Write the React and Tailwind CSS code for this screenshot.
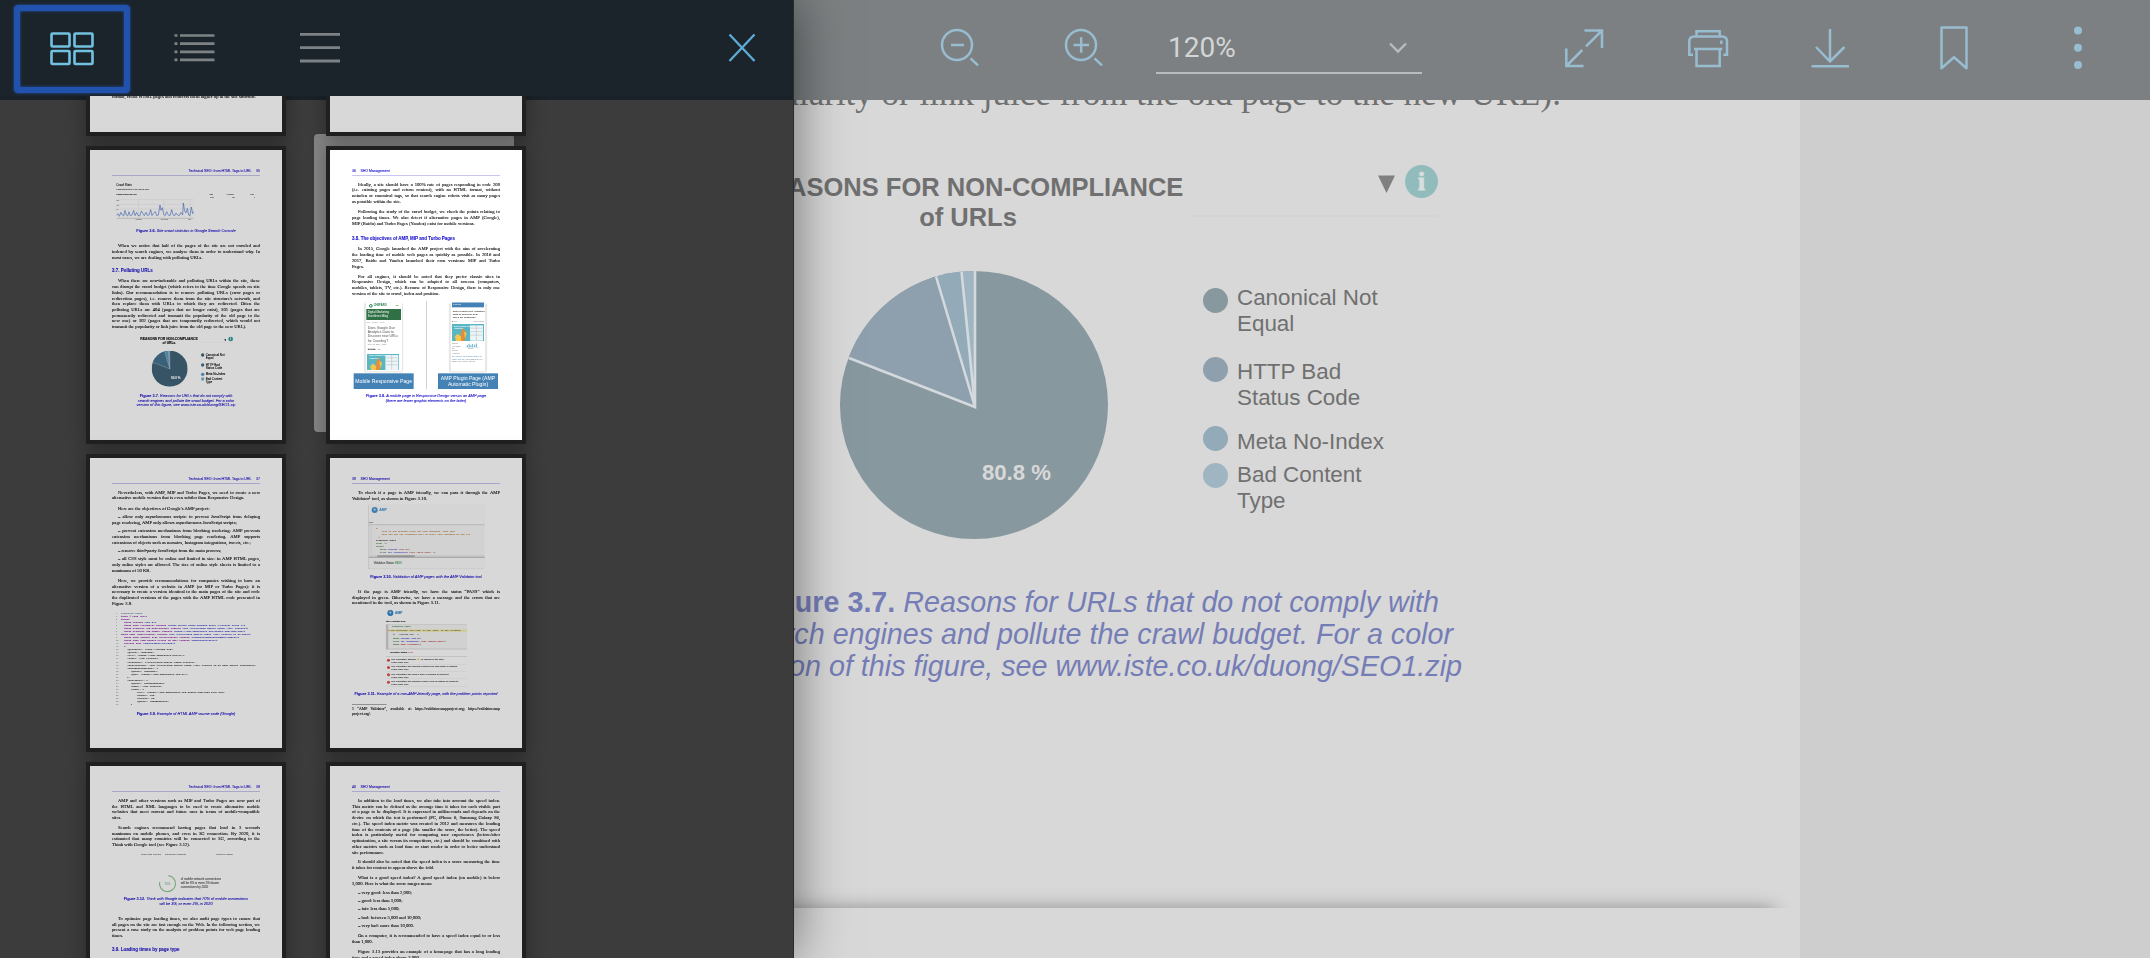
import React from "react";

const SERIF = "font-['Liberation_Serif',serif]";
const SANS = "font-['Liberation_Sans',sans-serif]";

/* ---------- Thumbnail building blocks (drawn at 3x, scaled down) ---------- */

function Thumb({ active, children }) {
  return (
    <div className="relative">
      {active && (
        <div className="absolute -left-3 -top-3 -z-10 h-[298px] w-[200px] rounded bg-[#858585]" />
      )}
      <div className="h-[298px] w-[200px] border-4 border-[#202020] shadow-[0_3px_18px_rgba(0,0,0,0.32)]">
        <div className={active ? "h-[290px] w-[192px] overflow-hidden bg-white" : "h-[290px] w-[192px] overflow-hidden bg-white brightness-[0.847]"}>
          <div className="h-[870px] w-[576px] origin-top-left scale-[0.33333] px-[66px] text-black [-webkit-text-stroke:0.25px]">
            {children}
          </div>
        </div>
      </div>
    </div>
  );
}

function Head({ left, page, title }) {
  return (
    <div className="pt-[54px] font-['Liberation_Sans',sans-serif] text-[10.6px] text-[#1a10c8]">
      <div className={left ? "flex h-[22px] gap-[14px] border-b border-[#5a52cc] leading-[19px]" : "flex h-[22px] flex-row-reverse gap-[14px] border-b border-[#5a52cc] leading-[19px]"}>
        <span>{page}</span>
        <span>{title}</span>
      </div>
    </div>
  );
}

function Para({ h, lines, full }) {
  return (
    <div className={`${SERIF} ${h} text-[14px] leading-[17.2px] whitespace-nowrap`}>
      {lines.map((l, i) => (
        <div
          key={i}
          className={`${i === 0 ? "pl-[18px]" : ""} ${i < lines.length - 1 || full ? "[text-align-last:justify]" : ""}`}
        >
          {l}
        </div>
      ))}
    </div>
  );
}

function Section({ h, children }) {
  return <div className={`${SANS} ${h} text-[13.4px] font-bold leading-[17.2px] whitespace-nowrap text-[#1a10c8]`}>{children}</div>;
}

function Caption({ h, label, lines }) {
  return (
    <div className={`${SANS} ${h} text-center text-[11.6px] italic leading-[13px] whitespace-nowrap text-[#1a10c8]`}>
      {lines.map((l, i) => (
        <div key={i}>
          {i === 0 && <b className="not-italic">{label} </b>}
          {l}
        </div>
      ))}
    </div>
  );
}

/* ---------- Pie chart ---------- */

function Pie({ className, dark, mid, light, pale, line }) {
  return (
    <svg viewBox="-134 -134 268 268" className={className}>
      <circle r="134" fill={dark} />
      <path d="M0 0 L-125 -48 A134 134 0 0 1 -38 -128.5 Z" fill={mid} />
      <path d="M0 0 L-38 -128.5 A134 134 0 0 1 -12.5 -133.4 Z" fill={light} />
      <path d="M0 0 L-12.5 -133.4 A134 134 0 0 1 1 -134 Z" fill={pale} />
      <path d="M1 -134 V2 L-125 -47 M1 2 L-38 -128.5 M1 2 L-12.5 -133.4" fill="none" stroke={line} strokeWidth="2.6" />
    </svg>
  );
}

/* ---------- Thumbnails ---------- */

const CRAWL =
  "0,46 5,40 9,48 14,36 18,44 22,47 26,30 30,44 34,47 38,34 42,46 47,44 52,30 56,46 61,36 65,45 70,47 75,32 80,40 84,46 89,36 93,45 98,44 103,28 107,46 112,38 117,34 121,46 126,44 131,14 134,30 138,22 142,42 146,46 151,34 156,44 161,46 166,28 170,42 174,47 179,38 184,44 189,46 194,36 199,44 201,8 205,32 209,38 213,24 217,44 221,46 225,20 229,40 232,34";

function Page35() {
  return (
    <Thumb>
      <Head page="35" title="Technical SEO: from HTML Tags to URL" />
      <div className="h-[159px] pl-[13px] pt-[23px] font-['Liberation_Sans',sans-serif] text-[#555]">
        <div className="text-[9px] leading-[13px] text-[#222]">Crawl Stats</div>
        <div className="text-[6px] leading-[13px]">Googlebot activity in the last 90 days</div>
        <div className="flex text-[6px] leading-[14px]">
          <span className="w-[278px] text-[#222]">Pages crawled per day</span>
          <span className="w-[52px]">High</span>
          <span className="w-[72px]">Average</span>
          <span>Low</span>
        </div>
        <div className="flex text-[6px] leading-[8px]">
          <span className="w-[282px]" />
          <span className="w-[66px]">131</span>
          <span className="w-[65px]">38</span>
          <span>4</span>
        </div>
        <svg viewBox="0 0 234 68" className="h-[68px] w-[234px]">
          <path d="M0 2H232 M0 16H232 M0 30H232 M66 2V58 M143 2V58 M222 2V58" stroke="#ddd" />
          <path d="M0 58H232" stroke="#888" />
          <polyline points={CRAWL} fill="none" stroke="#4a72d0" strokeWidth="1.9" transform="translate(0,4)" />
          <text x="56" y="64" fontSize="5" fill="#333">Apr 2018</text>
          <text x="133" y="64" fontSize="5" fill="#333">May 2018</text>
          <text x="216" y="64" fontSize="5" fill="#333">Jun</text>
          <text x="0" y="6" fontSize="5" fill="#333">150</text>
          <text x="0" y="20" fontSize="5" fill="#333">100</text>
          <text x="0" y="34" fontSize="5" fill="#333">50</text>
        </svg>
      </div>
      <Caption h="h-[44px]" label="Figure 3.6." lines={["Site crawl statistics in Google Search Console"]} />
      <Para h="h-[73px]" lines={["When we notice that half of the pages of the site are not crawled and", "indexed by search engines, we analyze them in order to understand why. In", "most cases, we are dealing with polluting URLs."]} />
      <Section h="h-[32px]">3.7. Polluting URLs</Section>
      <Para
        h="h-[177px]"
        lines={[
          "When there are non-indexable and polluting URLs within the site, these",
          "can disrupt the crawl budget (which refers to the time Google spends on site",
          "links). Our recommendation is to remove polluting URLs (error pages or",
          "redirection pages), i.e. remove them from the site structure's network, and",
          "then replace them with URLs to which they are redirected. Often the",
          "polluting URLs are 404 (pages that no longer exist), 301 (pages that are",
          "permanently redirected and transmit the popularity of the old page to the",
          "new one) or 302 (pages that are temporarily redirected, which would not",
          "transmit the popularity or link juice from the old page to the new URL).",
        ]}
      />
      <div className="flex h-[41px] font-['Liberation_Sans',sans-serif]">
        <div className="ml-[82px] w-[178px] text-center text-[10.2px] font-bold leading-[12px] whitespace-nowrap">
          REASONS FOR NON-COMPLIANCE<br />of URLs
        </div>
        <div className="ml-[4px] flex h-[18px] w-[99px] items-center justify-end gap-[5px] border-b border-[#eee]">
          <span className="text-[9px] leading-none">▼</span>
          <span className="-mt-[6px] flex size-[14px] items-center justify-center rounded-full bg-[#2a9d97] text-[10px] font-bold leading-none text-white">i</span>
        </div>
      </div>
      <div className="flex h-[129px]">
        <div className="ml-[119px] grid h-[108px] w-[108px]">
          <Pie className="col-start-1 row-start-1 size-[108px]" dark="#406379" mid="#44728f" light="#5a97ba" pale="#7bb1cc" line="#dfe8ee" />
          <span className="col-start-1 row-start-1 self-end justify-self-end pb-[21px] pr-[22px] font-['Liberation_Sans',sans-serif] text-[9px] font-bold leading-[12px] text-white">80.8 %</span>
        </div>
        <div className="ml-[40px] pt-[7px] font-['Liberation_Sans',sans-serif] text-[9px] leading-[10.4px]">
          <MiniKey c="bg-[#406379]" h="h-[30px]">Canonical Not<br />Equal</MiniKey>
          <MiniKey c="bg-[#44728f]" h="h-[28px]">HTTP Bad<br />Status Code</MiniKey>
          <MiniKey c="bg-[#5a97ba]" h="h-[14px]">Meta No-Index</MiniKey>
          <MiniKey c="bg-[#7bb1cc]" h="h-[22px]">Bad Content<br />Type</MiniKey>
        </div>
      </div>
      <Caption label="Figure 3.7." h="h-[40px]" lines={["Reasons for URLs that do not comply with", "search engines and pollute the crawl budget. For a color", "version of this figure, see www.iste.co.uk/duong/SEO1.zip"]} />
    </Thumb>
  );
}

function MiniKey({ c, h, children }) {
  return (
    <div className={`flex gap-[4px] ${h}`}>
      <span className={`mt-px size-[10px] rounded-full ${c}`} />
      <span className="whitespace-nowrap">{children}</span>
    </div>
  );
}

function Promo({ className }) {
  return (
    <svg viewBox="0 0 92 50" preserveAspectRatio="xMidYMin slice" className={className}>
      <rect width="92" height="50" fill="#59b7c4" />
      <rect x="52" y="4" width="37" height="44" fill="#eef5f7" />
      <path d="M54 12H87 M54 22H87 M54 32H87 M70 4V46" stroke="#a9b8bd" strokeWidth="1.4" />
      <path d="M8 36 L16 28 L26 36 V50 H12 Z" fill="#f3c74b" />
      <path d="M26 24 L32 12 L40 24 L36 50 H26 Z" fill="#ea8b35" />
      <path d="M34 22 L42 26 L38 42 Z" fill="#f3c74b" />
      <text x="5" y="8" fontSize="6" fontWeight="bold" fill="#fff">Does Google Use</text>
      <text x="5" y="15" fontSize="6" fontWeight="bold" fill="#fff">Analytics</text>
    </svg>
  );
}

function Page36() {
  return (
    <Thumb active>
      <Head left page="36" title="SEO Management" />
      <div className="h-[18px]" />
      <Para h="h-[83px]" lines={["Ideally, a site should have a 100% rate of pages responding in code 200", "(i.e. existing pages and return content), with an HTML format, without", "noindex or canonical tags, so that search engine robots visit as many pages", "as possible within the site."]} />
      <Para h="h-[79px]" lines={["Following the study of the crawl budget, we check the points relating to", "page loading times. We also detect if alternative pages in AMP (Google),", "MIP (Baidu) and Turbo Pages (Yandex) exist for mobile versions."]} />
      <Section h="h-[32px]">3.8. The objectives of AMP, MIP and Turbo Pages</Section>
      <Para h="h-[82px]" lines={["In 2015, Google launched the AMP project with the aim of accelerating", "the loading time of mobile web pages as quickly as possible. In 2016 and", "2017, Baidu and Yandex launched their own versions: MIP and Turbo", "Pages."]} />
      <Para h="h-[83px]" lines={["For all engines, it should be noted that they prefer classic sites in", "Responsive Design, which can be adapted to all screens (computers,", "mobiles, tablets, TV, etc.). Because of Responsive Design, there is only one", "version of the site to crawl, index and position."]} />
      <div className="flex h-[278px] font-['Liberation_Sans',sans-serif] [-webkit-text-stroke:0]">
        <div className="ml-[5px] w-[180px] pt-[4px]">
          <div className="mx-auto h-[208px] w-[110px] overflow-hidden bg-white px-[3px] shadow-[0_1px_5px_rgba(0,0,0,0.4)]">
            <div className="flex h-[20px] items-center gap-[3px] px-[8px] text-[8px] font-bold text-[#207848]">
              <span className="size-[11px] rounded-full border-[3px] border-[#207848]" />
              CHEFARO <span className="ml-auto text-[#84b840]">▬</span>
            </div>
            <div className="h-[33px] bg-[#2f7044] px-[4px] pt-[4px] text-[8.6px] leading-[11px] whitespace-nowrap text-white">Digital Marketing<br />Excellence Blog</div>
            <div className="h-[18px] pt-[5px] text-[5px] text-[#999]">SEO · Analytics · Google</div>
            <div className="h-[52px] px-[4px] text-[10.4px] leading-[12.6px] whitespace-nowrap text-[#555]">Does Google Use<br />Analytics Data to<br />Discover new URLs<br />for Crawling?</div>
            <div className="h-[31px] px-[4px] text-[6px] text-[#888]">June 15, 2018 · SEO<div className="pt-[6px] text-[8px] leading-none text-[#666]">■■■■■ <span className="text-[6px]">+ 25</span></div></div>
            <Promo className="mx-[3px] h-[48px] w-[96px]" />
          </div>
          <div className="mt-[5px] flex h-[47px] items-center justify-center bg-[#4482b6] text-[15.4px] whitespace-nowrap text-white">Mobile Responsive Page</div>
        </div>
        <div className="ml-[38px] h-[265px] w-px bg-[#777]" />
        <div className="ml-[34px] w-[180px] pt-[4px]">
          <div className="mx-auto h-[208px] w-[106px] overflow-hidden bg-white px-[5px] shadow-[0_1px_5px_rgba(0,0,0,0.4)]">
            <div className="h-[15px] bg-[#4482b6] px-[3px] text-[5px] leading-[14px] text-white">CHEFARO</div>
            <div className="px-[2px] pt-[8px] text-[7.4px] font-bold leading-[8.6px] whitespace-nowrap text-[#333]">Does Google Use Analytics<br />Data to Discover new<br />URLs for Crawling?</div>
            <div className="flex h-[16px] items-center justify-between text-[5px] text-[#777]"><span>■ Andy</span><span>June 15, 2018</span></div>
            <Promo className="h-[51px] w-[96px]" />
            <div className="flex h-[42px] gap-[10px] pt-[5px] text-[5.6px] leading-[7px] text-[#777]">
              <span className="w-[26px]">Should you install the Google Analytics</span>
              <svg viewBox="0 0 50 30" className="h-[26px] w-[50px]"><path d="M2 16H48" stroke="#4aa3c4" /><path d="M8 15V9 M14 15V4 M20 15V8 M26 15V5 M33 15V7 M39 15V3" stroke="#4aa3c4" strokeWidth="3" /><text x="10" y="23" fontSize="5" fill="#777">analytics</text></svg>
            </div>
            <div className="pt-[2px] text-[6px] leading-[7.4px]"><span className="text-[#3f86bb]">on your site for search engines to crawl your site.</span> <span className="text-[#777]">This argument is a simple one, but be careful.</span></div>
          </div>
          <div className="mt-[5px] flex h-[47px] items-center justify-center bg-[#4482b6] text-center text-[15.4px] leading-[18px] whitespace-nowrap text-white">AMP Plugin Page (AMP<br />Automatic Plugin)</div>
        </div>
      </div>
      <Caption h="h-[26px]" label="Figure 3.8." lines={["A mobile page in Responsive Design versus an AMP page", "(there are fewer graphic elements on the latter)"]} />
    </Thumb>
  );
}

const CODE = [
  ["", "text-[#68a]", "<!doctype html>"],
  ["", "text-[#81a]", '<html ⚡ lang="en">'],
  ["", "text-[#81a]", "<head>"],
  ["pl-[10px]", "text-[#81a]", "<meta charset=", '"utf-8">'],
  ["pl-[10px]", "text-[#81a]", '<meta name="viewport" content=', '"width=device-width,minimum-scale=1,initial-scale=1">'],
  ["pl-[10px]", "text-[#81a]", '<meta property="og:description" content=', '"The Accelerated Mobile Pages (AMP) Project">'],
  ["pl-[10px]", "text-[#81a]", '<meta property="og:image" content=', '"https://www.ampproject.org/static/img/logo.jpg">'],
  ["", "text-[#81a]", '<meta name="description" content=', '"The Accelerated Mobile Pages (AMP) Project is an open">'],
  ["pl-[10px]", "text-[#81a]", '<meta name="google-site-verification" content=', '"KRqSNjTcjW8eGfOfTnMZqGcYPpQhJk">'],
  ["pl-[10px]", "text-[#81a]", '<meta name="amp-google-client-id-api" content=', '"googleanalytics">'],
  ["pl-[10px]", "text-[#81a]", "<script type=", '"application/ld+json">'],
  ["pl-[10px]", "", "{"],
  ["pl-[20px]", "", '"@context": "http://schema.org",'],
  ["pl-[20px]", "", '"@type": "WebPage",'],
  ["pl-[20px]", "", '"url": "https://www.ampproject.org/fr/",'],
  ["pl-[20px]", "", '"name": "AMP Project",'],
  ["pl-[20px]", "", '"headline": "Accelerated Mobile Pages Project",'],
  ["pl-[20px]", "", '"description": "The Accelerated Mobile Pages (AMP) Project is an open source initiative"'],
  ["pl-[20px]", "", '"mainEntityOfPage": {'],
  ["pl-[30px]", "", '"@type": "WebPage",'],
  ["pl-[30px]", "", '"@id": "https://www.ampproject.org/fr/"'],
  ["pl-[20px]", "", "},"],
  ["pl-[20px]", "", '"publisher": {'],
  ["pl-[30px]", "", '"@type": "Organization",'],
  ["pl-[30px]", "", '"name": "AMP Project",'],
  ["pl-[30px]", "", '"logo": {'],
  ["pl-[48px]", "", '"url": "https://www.ampproject.org/static/img/logo-blue.svg",'],
  ["pl-[48px]", "", '"width": 175,'],
  ["pl-[48px]", "", '"height": 60,'],
  ["pl-[48px]", "", '"@type": "ImageObject"'],
  ["pl-[30px]", "", "}"],
];

function Page37() {
  return (
    <Thumb>
      <Head page="37" title="Technical SEO: from HTML Tags to URL" />
      <div className="h-[18px]" />
      <Para h="h-[48px]" lines={["Nevertheless, with AMP, MIP and Turbo Pages, we need to create a new", "alternative mobile version that is even subtler than Responsive Design."]} />
      <Para h="h-[26px]" lines={["Here are the objectives of Google's AMP project:"]} />
      <Para h="h-[42px]" lines={["– allow only asynchronous scripts: to prevent JavaScript from delaying", "page rendering, AMP only allows asynchronous JavaScript scripts;"]} />
      <Para h="h-[59px]" lines={["– prevent extension mechanisms from blocking rendering: AMP prevents", "extension mechanisms from blocking page rendering. AMP supports", "extensions of objects such as mosaics, Instagram integrations, tweets, etc.;"]} />
      <Para h="h-[25px]" lines={["– remove third-party JavaScript from the main process;"]} />
      <Para h="h-[65px]" lines={["– all CSS style must be online and limited in size: in AMP HTML pages,", "only online styles are allowed. The size of online style sheets is limited to a", "maximum of 50 KB."]} />
      <Para h="h-[103px]" lines={["Here, we provide recommendations for companies wishing to have an", "alternative version of a website in AMP (or MIP or Turbo Pages): it is", "necessary to create a version identical to the main pages of the site and code", "the duplicated versions of the pages with the AMP HTML code presented in", "Figure 3.9."]} />
      <div className="h-[299px] overflow-hidden pl-[12px] pr-[6px] font-['Liberation_Mono',monospace] text-[7.3px] leading-[9.1px] whitespace-nowrap text-[#333]">
        {CODE.map(([pad, color, a, b], i) => (
          <div key={i} className="flex overflow-hidden">
            <span className="w-[14px] shrink-0 text-[6px] text-[#aaa]">{i + 1}</span>
            <span className={`${pad} ${color}`}>{a}</span>
            <span className="text-[#33c]">{b}</span>
          </div>
        ))}
      </div>
      <Caption label="Figure 3.9." h="h-[20px]" lines={["Example of HTML AMP source code (Google)"]} />
    </Thumb>
  );
}

function AmpLogo() {
  return (
    <span className="flex items-center gap-[5px] text-[10px] font-bold text-[#1c79c0]">
      <span className="flex size-[18px] items-center justify-center rounded-full bg-[#1c79c0] text-[10px] text-white">ϟ</span>AMP
    </span>
  );
}

function Page38() {
  return (
    <Thumb>
      <Head left page="38" title="SEO Management" />
      <div className="h-[19px]" />
      <Para h="h-[46px]" lines={["To check if a page is AMP friendly, we can pass it through the AMP", "Validator¹ tool, as shown in Figure 3.10."]} />
      <div className="ml-[50px] h-[191px] w-[348px] bg-[#fafafa] font-['Liberation_Sans',sans-serif] opacity-80 shadow-[-1px_1px_3px_rgba(0,0,0,0.3)]">
        <div className="h-[46px] pl-[9px] pt-[6px]"><AmpLogo /></div>
        <div className="h-[15px] border-b-2 border-[#999] text-[7px] text-[#444]">URL</div>
        <div className="ml-[3px] h-[90px] overflow-hidden border-l-8 border-[#eee] bg-[#f7f7f7] pl-[10px] pt-[6px] font-['Liberation_Mono',monospace] text-[6.8px] leading-[9px] whitespace-nowrap">
          <div className="text-[#b06a20]">&lt;!--</div>
          <div className="pl-[18px] text-[#b06a20]">This is the minimum valid AMP HTML document. Type away</div>
          <div className="pl-[18px] text-[#b06a20]">here and the AMP Validator will re-check your document on the fly.</div>
          <div className="text-[#b06a20]">--&gt;</div>
          <div>&lt;!doctype html&gt;</div>
          <div className="text-[#2a7a2a]">&lt;html <span className="text-[#e59a20]">⚡</span>&gt;</div>
          <div className="text-[#2a7a2a]">&lt;head&gt;</div>
          <div className="pl-[12px] text-[#2a7a2a]">&lt;meta <span className="text-[#33c]">charset=</span><span className="text-[#b33]">"utf-8"</span>&gt;</div>
          <div className="pl-[12px] text-[#2a7a2a]">&lt;link <span className="text-[#33c]">rel="canonical"</span> <span className="text-[#b33]">href="self.html"</span> /&gt;</div>
        </div>
        <div className="h-[8px] border-b-2 border-[#aaa] bg-[#ddd]"><div className="ml-[26px] h-[5px] w-[112px] bg-[#999]" /></div>
        <div className="pl-[15px] pt-[9px] text-[8px] text-[#333]">Validation Status: <span className="text-[#3a9d4a]">PASS</span></div>
      </div>
      <div className="h-[18px]" />
      <Caption h="h-[42px]" label="Figure 3.10." lines={["Validation of AMP pages with the AMP Validator tool"]} />
      <Para h="h-[64px]" lines={["If the page is AMP friendly, we have the status “PASS” which is", "displayed in green. Otherwise, we have a message and the errors that are", "mentioned in the tool, as shown in Figure 3.11."]} />
      <div className="ml-[101px] h-[243px] w-[244px] overflow-hidden font-['Liberation_Sans',sans-serif] text-[7px] leading-[8.5px] whitespace-nowrap opacity-90">
        <div className="h-[30px] pl-[5px]"><AmpLogo /></div>
        <div className="h-[14px] border-b border-[#999]">http://validator.amp</div>
        <div className="h-[74px] overflow-hidden border-b-2 border-l-8 border-[#ccc] bg-[#f7f7f7] pt-[2px] font-['Liberation_Mono',monospace] text-[6.4px] text-[#2a7a2a]">
          <div className="pl-[10px]">&lt;!doctype html&gt;</div>
          <div className="my-[3px] bg-[#f6efb0] text-[#664]"><span className="text-[#d33]">■</span> The attribute 'xml:lang' in tag 'html' is not "allowed"</div>
          <div className="pl-[14px] text-[#555]">&lt;!-- charset tag --&gt;</div>
          <div className="mt-[4px] pl-[14px]">&lt;meta <span className="text-[#33c]">charset="utf-8"</span>&gt;</div>
          <div className="pl-[14px]">&lt;link <span className="text-[#33c]">rel="canonical"</span> <span className="text-[#b33]">href="sample.html"</span>&gt;</div>
          <div className="pl-[14px]">&lt;meta <span className="text-[#b33]">name="viewport"</span>&gt;</div>
        </div>
        <div className="h-[23px] border-b border-[#aaa] pl-[12px] pt-[5px]">Validation Status: <span className="text-[#d33]">FAIL</span></div>
        {["The mandatory attribute '⚡' is missing in tag 'html'.", "The mandatory tag 'noscript enclosure for boilerplate' is missing.", "The mandatory tag 'head > style' is missing or incorrect.", "The mandatory tag 'amphtml engine v0.js' is missing or incorrect."].map((t) => (
          <div key={t} className="flex h-[22px] gap-[4px] border-b border-[#ddd] pt-[3px] text-[#333]">
            <span className="ml-[4px] mt-[2px] size-[9px] rounded-full bg-[#dd3a30]" />
            <span>{t}<br />Learn more here</span>
          </div>
        ))}
      </div>
      <div className="-mx-[20px]"><Caption label="Figure 3.11." h="h-[39px]" lines={["Example of a non-AMP-friendly page, with the problem points reported"]} /></div>
      <div className="h-[6px] w-[104px] border-t border-black" />
      <div className="font-['Liberation_Serif',serif] text-[11.6px] leading-[16px] whitespace-nowrap">
        <div className="[text-align-last:justify]">1 “AMP Validator”, available at: https://validator.ampproject.org; https://validator.amp</div>
        <div>project.org/.</div>
      </div>
    </Thumb>
  );
}

function Page39() {
  return (
    <Thumb>
      <Head page="39" title="Technical SEO: from HTML Tags to URL" />
      <div className="h-[19px]" />
      <Para h="h-[81px]" lines={["AMP and other versions such as MIP and Turbo Pages are now part of", "the HTML and XML languages to be used to create alternative mobile", "websites that meet current and future uses in terms of mobile-compatible", "sites."]} />
      <Para h="h-[83px]" lines={["Search engines recommend having pages that load in 3 seconds", "maximum on mobile phones, and even in 3G connection. By 2020, it is", "estimated that many countries will be connected to 3G, according to the", "Think with Google tool (see Figure 3.12)."]} />
      <div className="flex h-[67px] pl-[87px] font-['Liberation_Sans',sans-serif] text-[7.5px] leading-[12px] text-[#777]">
        <span className="w-[72px]">Think with <span className="text-[#3b78e7]">G</span><span className="text-[#d33]">o</span><span className="text-[#eb0]">o</span><span className="text-[#3b78e7]">gle</span></span>
        <span className="w-[154px]">Consumer Insights</span>
        <span>Test my mobile</span>
      </div>
      <div className="flex h-[66px] pl-[139px] font-['Liberation_Sans',sans-serif] text-[9px] leading-[12.4px] text-[#555]">
        <svg viewBox="-27 -27 54 54" className="size-[54px]">
          <path d="M3 -24 A24 24 0 1 1 -23 -5" fill="none" stroke="#8cc48e" strokeWidth="3.5" />
          <text y="3" fontSize="9" textAnchor="middle" fill="#68b36b">70%</text>
        </svg>
        <div className="pl-[13px] pt-[7px] whitespace-nowrap">of mobile network connections<br />will be 3G or even 2G slower<br />connections by 2020</div>
      </div>
      <Caption h="h-[57px]" label="Figure 3.12." lines={["Think with Google indicates that 70% of mobile connections", "will be 3G, or even 2G, in 2020"]} />
      <Para h="h-[94px]" lines={["To optimize page loading times, we also audit page types to ensure that", "all pages on the site are fast enough on the Web. In the following section, we", "present a case study on the analysis of problem points for web page loading", "times."]} />
      <Section h="h-[32px]">3.9. Loading times by page type</Section>
    </Thumb>
  );
}

function Page40() {
  return (
    <Thumb>
      <Head left page="40" title="SEO Management" />
      <div className="h-[19px]" />
      <Para
        h="h-[184px]"
        lines={[
          "In addition to the load times, we also take into account the speed index.",
          "This metric can be defined as the average time it takes for each visible part",
          "of a page to be displayed. It is expressed in milliseconds and depends on the",
          "device on which the test is performed (PC, iPhone 6, Samsung Galaxy S6,",
          "etc.). The speed index metric was created in 2012 and measures the loading",
          "time of the contents of a page (the smaller the score, the better). The speed",
          "index is particularly useful for comparing user experiences (before/after",
          "optimization, a site versus its competitors, etc.) and should be combined with",
          "other metrics such as load time or start render in order to better understand",
          "site performance.",
        ]}
      />
      <Para h="h-[47px]" lines={["It should also be noted that the speed index is a score measuring the time", "it takes for content to appear above the fold."]} />
      <Para h="h-[44px]" lines={["What is a good speed index? A good speed index (on mobile) is below", "3,000. Here is what the score ranges mean:"]} />
      <Para h="h-[25px]" lines={["– very good: less than 2,000;"]} />
      <Para h="h-[25px]" lines={["– good: less than 3,000;"]} />
      <Para h="h-[25px]" lines={["– fair: less than 5,000;"]} />
      <Para h="h-[24px]" lines={["– bad: between 5,000 and 10,000;"]} />
      <Para h="h-[32px]" lines={["– very bad: more than 10,000."]} />
      <Para h="h-[47px]" lines={["On a computer, it is recommended to have a speed index equal to or less", "than 1,000."]} />
      <Para h="h-[40px]" lines={["Figure 3.13 provides an example of a homepage that has a long loading", "time and a speed index above 3,000."]} />
    </Thumb>
  );
}

function Page33() {
  return (
    <Thumb>
      <div className="h-[754px]" />
      <div className="font-['Liberation_Serif',serif] text-[14px] leading-[17.2px] whitespace-nowrap">format, create HTML pages and redirects them higher up in the site structure.</div>
    </Thumb>
  );
}

/* ---------- Side panel ---------- */

function SidePanel() {
  return (
    <aside className="absolute inset-y-0 left-0 z-20 flex w-[794px] flex-col border-r border-[#2c2c2c] bg-[#3c3c3c] shadow-[0_0_50px_rgba(0,0,0,0.5)]">
      <header className="z-10 flex h-24 shrink-0 items-start bg-[#1c242b]">
        <button className="ml-[14px] mt-[5px] flex h-[88px] w-[116px] items-center justify-center rounded-[4px] border-[6px] border-[#2052ae] shadow-[0_0_3px_#2052ae,inset_0_0_3px_#2052ae]">
          <svg width="44" height="34" viewBox="0 0 44 34" fill="none" stroke="#72c1e1" strokeWidth="2.6">
            <rect x="1.5" y="1.5" width="18" height="13" rx="1" />
            <rect x="24.5" y="1.5" width="18" height="13" rx="1" />
            <rect x="1.5" y="19" width="18" height="13" rx="1" />
            <rect x="24.5" y="19" width="18" height="13" rx="1" />
          </svg>
        </button>
        <svg className="ml-[44px] mt-[32px]" width="42" height="32" fill="none" stroke="#7c8285" strokeWidth="2.7">
          <path d="M6 3.5H40.5M6 11.7H40.5M6 19.8H40.5M6 27.9H40.5" />
          <path d="M0.5 3.5H3.5M0.5 11.7H3.5M0.5 19.8H3.5M0.5 27.9H3.5" />
        </svg>
        <svg className="ml-[84px] mt-[32px]" width="40" height="32" fill="none" stroke="#7c8285" strokeWidth="2.8">
          <path d="M0 2.4H40M0 15.7H40M0 29H40" />
        </svg>
        <svg className="ml-[388px] mt-[33px]" width="30" height="30" fill="none" stroke="#5fabd5" strokeWidth="2.3">
          <path d="M1.5 1.5L26.5 28M26.5 1.5L1.5 28" />
        </svg>
      </header>
      <div className="min-h-0 flex-1 overflow-hidden bg-[linear-gradient(to_bottom,#1a2128_4px,#3c3c3c_4px)]">
        <div className="isolate -mt-[258px] grid grid-cols-[200px_200px] gap-x-10 gap-y-[10px] pl-[86px]">
          <Page33 />
          <Thumb />
          <Page35 />
          <Page36 />
          <Page37 />
          <Page38 />
          <Page39 />
          <Page40 />
        </div>
      </div>
    </aside>
  );
}

/* ---------- Toolbar ---------- */

function Icon({ className, children }) {
  return (
    <svg className={`size-12 shrink-0 ${className}`} viewBox="0 0 48 48" fill="none" stroke="#98bcd0" strokeWidth="2.5">
      {children}
    </svg>
  );
}

function Toolbar() {
  return (
    <div className="z-10 flex h-[100px] shrink-0 items-start bg-[#7c8082] pl-[936px] pt-6">
      <Icon className="">
        <circle cx="21" cy="21" r="15" />
        <path d="M15 21H28M34.5 34.3L42 41.3" />
      </Icon>
      <Icon className="ml-[76px]">
        <circle cx="21" cy="21" r="15" />
        <path d="M13.5 21H29M21.2 13.3V28.7M34.5 34.3L42 41.3" />
      </Icon>
      <div className="ml-[48px] flex h-[50px] w-[266px] items-center justify-between border-b-2 border-[#b9bbbc] pl-[12px] pr-[15px] font-['Roboto',sans-serif] text-[28px] leading-[32px] text-[#d4d5d5]">
        <span>120%</span>
        <svg width="18" height="12" fill="none" stroke="#b9bdbf" strokeWidth="2.3"><path d="M1 1.5L9 9.5L17 1.5" /></svg>
      </div>
      <Icon className="ml-[138px]">
        <path d="M24.5 6.5H42V24M42 6.5L26 22.3M6.3 24.5V42H23.5M6.3 42L22.3 26" />
      </Icon>
      <Icon className="ml-[76px]">
        <path d="M12.5 12V7.3H35.7V12M9 30.7H5.3V17.5Q5.3 12.5 10.5 12.5H37.8Q43 12.5 43 17.5V30.7H39.3M10 25H38.3M12.5 25V42H35.7V25M37.3 16.5V20" />
      </Icon>
      <Icon className="ml-[74px]">
        <path d="M24 5V37M10 23L24 37.5L38.5 23M5.5 42.3H43" />
      </Icon>
      <Icon className="ml-[76px]">
        <path d="M11.5 3.5H36.5V44.3L24 33.3L11.5 44.3Z" strokeLinejoin="round" />
      </Icon>
      <Icon className="ml-[76px]">
        <g fill="#98bcd0" stroke="none"><circle cx="24" cy="6.5" r="4" /><circle cx="24" cy="23.7" r="4" /><circle cx="24" cy="41" r="4" /></g>
      </Icon>
    </div>
  );
}

/* ---------- Document ---------- */

function Key({ c, h, dot, children }) {
  return (
    <div className={`flex gap-[9px] ${h}`}>
      <span className={`size-[25px] shrink-0 rounded-full ${c} ${dot}`} />
      <span className="whitespace-nowrap">{children}</span>
    </div>
  );
}

function Document() {
  return (
    <div className="flex min-h-0 flex-1 overflow-hidden bg-[#cecece]">
      <div className="flex w-[1800px] flex-col overflow-hidden bg-[#d8d8d8] text-[#707070]">
        <div className="-mt-[27px] h-[91px] w-[1561px] shrink-0 text-right font-['Liberation_Serif',serif] text-[35px] leading-[42px] whitespace-nowrap">
          transmit the popularity or link juice from the old page to the new URL).
        </div>
        <div className="flex h-[107px] shrink-0 font-['Liberation_Sans',sans-serif]">
          <div className="ml-[752px] w-[432px] pt-[8px] text-center text-[25.5px] font-bold leading-[30px] whitespace-nowrap">
            REASONS FOR NON-COMPLIANCE
            <br />
            of URLs
          </div>
          <div className="ml-[8px] flex h-[53px] w-[246px] items-start justify-end gap-[10px] border-b-2 border-[#d0d4d2] pt-px">
            <svg className="mt-[10px]" width="17" height="18"><path d="M0 0.5H17L8.5 18Z" fill="#808080" /></svg>
            <span className="flex size-[33px] items-center justify-center rounded-full bg-[#92bcbc] font-['Liberation_Serif',serif] text-[25px] font-bold leading-none text-[#d8dede] [-webkit-text-stroke:1px]">i</span>
          </div>
        </div>
        <div className="flex h-[315px] shrink-0 font-['Liberation_Sans',sans-serif]">
          <div className="ml-[840px] grid size-[268px]">
            <Pie className="col-start-1 row-start-1 size-[268px]" dark="#88989f" mid="#8ea0ad" light="#93aab9" pale="#a0b5c2" line="#d3d9dc" />
            <span className="col-start-1 row-start-1 self-end justify-self-end pb-[53px] pr-[57px] text-[22.2px] font-bold leading-[26px] whitespace-nowrap text-[#d8d8d8]">80.8 %</span>
          </div>
          <div className="ml-[95px] pt-[14px] text-[22.4px] leading-[26px]">
            <Key c="bg-[#88989f]" dot="mt-[3px]" h="h-[74px]">Canonical Not<br />Equal</Key>
            <Key c="bg-[#8ea0ad]" dot="mt-[-2px]" h="h-[70px]">HTTP Bad<br />Status Code</Key>
            <Key c="bg-[#93aab9]" dot="mt-[-3px]" h="h-[33px]">Meta No-Index</Key>
            <Key c="bg-[#a0b5c2]" dot="mt-[1px]" h="h-[52px]">Bad Content<br />Type</Key>
          </div>
        </div>
        <div className="ml-[484px] h-[204px] w-[978px] shrink-0 font-['Liberation_Sans',sans-serif] text-[28.7px] italic leading-[32px] whitespace-nowrap text-[#757db6]">
          <div className="pr-[23px] text-right"><b className="not-italic">Figure 3.7.</b> Reasons for URLs that do not comply with</div>
          <div className="pr-[9px] text-right">search engines and pollute the crawl budget. For a color</div>
          <div className="text-right">version of this figure, see www.iste.co.uk/duong/SEO1.zip</div>
        </div>
        <div className="h-[118px] shrink-0 overflow-hidden">
          <div className="mt-[118px] h-10 w-[1774px] shadow-[0_0_18px_rgba(0,0,0,0.34)]" />
        </div>
      </div>
    </div>
  );
}

export default function App() {
  return (
    <div className="relative flex h-[958px] w-[2150px] flex-col overflow-hidden bg-[#d8d8d8]">
      <Toolbar />
      <Document />
      <SidePanel />
    </div>
  );
}
